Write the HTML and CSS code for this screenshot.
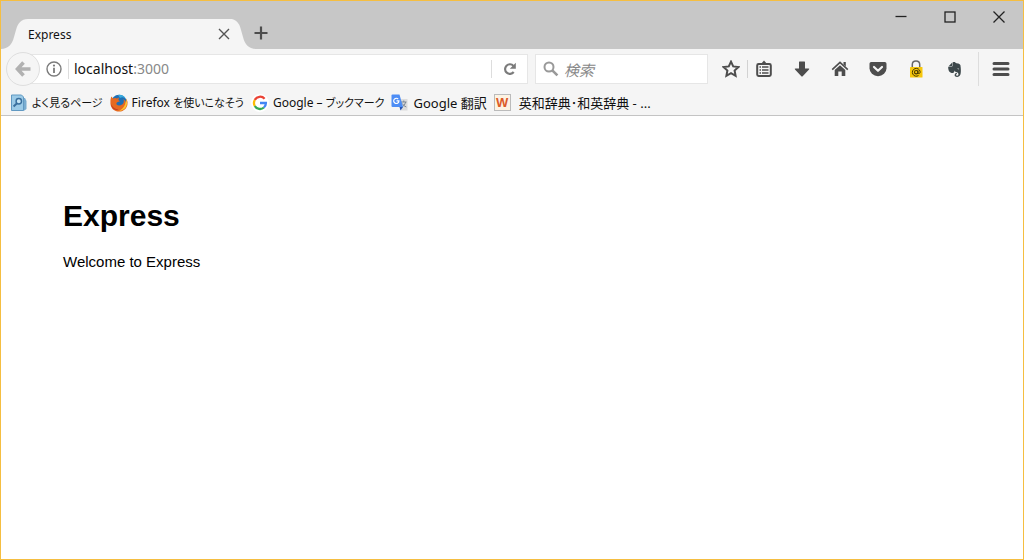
FILE: index.html
```html
<!DOCTYPE html>
<html lang="ja">
<head>
  <meta charset="UTF-8">
  <meta name="viewport" content="width=device-width, initial-scale=1.0">
  <title>Express</title>
  <link rel="stylesheet" href="styles.css">
</head>
<body>
  <div class="window">
    <header class="titlebar">
      <div class="tab">
        <svg class="tab-edge" width="27" height="30" viewBox="1 0 27 30"><path d="M0 30C8 30 12 26 14 18L16 11C18 4 21 0 28 0V30Z" fill="#f5f5f5"/></svg>
        <div class="tab-body">
          <span class="tab-title">Express</span>
          <button class="tab-close" aria-label="タブを閉じる">
            <svg width="12" height="12" viewBox="0 0 12 12"><path d="M1 1L11 11M11 1L1 11" stroke="#555" stroke-width="1.4" fill="none"/></svg>
          </button>
        </div>
        <svg class="tab-edge" width="25" height="30" viewBox="3 0 25 30"><path d="M28 30C20 30 16 26 14 18L12 11C11 6 9 2 3 0V30Z" fill="#f5f5f5"/></svg>
      </div>
      <button class="new-tab" aria-label="新しいタブ">
        <svg width="14" height="14" viewBox="0 0 14 14"><path d="M7 0.5V13.5M0.5 7H13.5" stroke="#4d4d4d" stroke-width="2.2" fill="none"/></svg>
      </button>
      <div class="window-buttons">
        <button aria-label="最小化"><svg width="12" height="12" viewBox="0 0 12 12"><path d="M0.5 5.5H11.5" stroke="#222" stroke-width="1.3"/></svg></button>
        <button aria-label="最大化"><svg width="12" height="12" viewBox="0 0 12 12"><rect x="1" y="1" width="10" height="10" fill="none" stroke="#222" stroke-width="1.3"/></svg></button>
        <button aria-label="閉じる"><svg width="12" height="12" viewBox="0 0 12 12"><path d="M0.5 0.5L11.5 11.5M11.5 0.5L0.5 11.5" stroke="#222" stroke-width="1.3"/></svg></button>
      </div>
    </header>

    <nav class="toolbar">
      <button class="back" aria-label="戻る">
        <svg width="16" height="16" viewBox="0 0 16 16"><path d="M8.5 1.5L2.5 8L8.5 14.5M3 8H15.5" stroke="#b1b1b1" stroke-width="3.6" fill="none"/></svg>
      </button>
      <div class="url-box">
        <svg class="info" width="16" height="16" viewBox="0 0 16 16"><circle cx="8" cy="8" r="7" fill="none" stroke="#7b7b7b" stroke-width="1.4"/><circle cx="8" cy="4.6" r="1.1" fill="#7b7b7b"/><path d="M8 6.8V12" stroke="#7b7b7b" stroke-width="1.8"/></svg>
        <a class="url" href="#">localhost<span>:3000</span></a>
        <button class="reload" aria-label="再読み込み">
          <svg width="14" height="14" viewBox="0 0 14 14"><path d="M10.5 3.9A4.8 4.8 0 1 0 10.7 10" stroke="#7b7b7b" stroke-width="2.2" fill="none"/><path d="M12.8 0.8V6.8H6.8Z" fill="#7b7b7b"/></svg>
        </button>
      </div>
      <label class="search-box">
        <svg width="16" height="16" viewBox="0 0 16 16"><circle cx="6" cy="6" r="4.5" fill="none" stroke="#999" stroke-width="2"/><path d="M9.3 9.3L14.4 14.4" stroke="#999" stroke-width="2.6"/></svg>
        <input type="text" placeholder="検索" aria-label="検索">
      </label>
      <button class="star" aria-label="ブックマーク">
        <svg width="18" height="18" viewBox="0 0 18 18"><path d="M9 1.7L11.2 6.4L16.4 7L12.6 10.5L13.6 15.8L9 13.2L4.4 15.8L5.4 10.5L1.6 7L6.8 6.4Z" fill="none" stroke="#4d4d4d" stroke-width="2"/></svg>
      </button>
      <div class="tools">
        <button aria-label="ブックマーク一覧">
          <svg width="16" height="18" viewBox="0 0 16 18"><path d="M5 4L8 0.5L11 4Z" fill="#4d4d4d"/><rect x="1.2" y="4" width="13.6" height="12" rx="1.4" fill="none" stroke="#4d4d4d" stroke-width="2"/><path d="M3.5 7H5M6 7H12.5M3.5 10H5M6 10H12.5M3.5 13H5M6 13H12.5" stroke="#4d4d4d" stroke-width="1.3"/></svg>
        </button>
        <button aria-label="ダウンロード">
          <svg width="16" height="18" viewBox="0 0 16 18"><path d="M5 2Q5 1.5 5.5 1.5H10.5Q11 1.5 11 2V8.5H14.5Q15.8 8.5 15 9.5L8.7 16.2Q8 16.8 7.3 16.2L1 9.5Q0.2 8.5 1.5 8.5H5Z" fill="#4d4d4d"/></svg>
        </button>
        <button aria-label="ホーム">
          <svg width="18" height="18" viewBox="0 0 18 18"><path d="M1.2 9.6L9 2.4L16.8 9.6" fill="none" stroke="#4d4d4d" stroke-width="1.6"/><path d="M12.5 2H14.8V6.5L12.5 4.4ZM9 5.2L14.3 10V16H10.7V11.5H7.3V16H3.7V10Z" fill="#4d4d4d"/></svg>
        </button>
        <button aria-label="Pocket">
          <svg width="18" height="18" viewBox="0 0 18 18"><path d="M2.2 2H15.8Q17.5 2 17.5 3.7V8.2A8.5 8 0 0 1 0.5 8.2V3.7Q0.5 2 2.2 2Z" fill="#4d4d4d"/><path d="M5 7L9 10.8L13 7" fill="none" stroke="#f5f5f5" stroke-width="2.2" stroke-linecap="round" stroke-linejoin="round"/></svg>
        </button>
        <button aria-label="パスワード">
          <svg width="14" height="18" viewBox="0 0 14 18"><path d="M3.3 8V4.5Q3.3 1 7 1T10.7 4.5V8" fill="none" stroke="#666" stroke-width="1.5"/><rect x="1" y="7" width="12.5" height="10.5" rx="0.6" fill="#f7c70d"/><circle cx="7.2" cy="12.2" r="1.7" fill="none" stroke="#463800" stroke-width="1.1"/><path d="M9 10.4V12.6Q9.2 14 10.3 13.6Q11.3 13 11.1 11.6A3.9 3.9 0 1 0 9.5 15.5" fill="none" stroke="#463800" stroke-width="1"/></svg>
        </button>
        <button aria-label="Evernote">
          <svg width="15" height="15" viewBox="0 0 24 24"><path fill="#3d484b" d="M8.222 5.393c0 .239-.02.637-.256.895-.257.24-.652.259-.888.259H4.552c-.73 0-1.165 0-1.46.04-.159.02-.356.1-.455.14-.04.019-.04 0-.02-.02L8.38.796c.02-.02.04-.02.02.02-.04.099-.118.298-.138.457-.04.298-.04.736-.04 1.472v2.647zm5.348 17.869c-.67-.438-1.026-1.015-1.164-1.373a2.924 2.924 0 01-.217-1.095 3.007 3.007 0 013-3.004c.493 0 .888.398.888.895a.88.88 0 01-.454.776c-.099.06-.237.1-.336.12-.098.02-.473.06-.65.218-.198.16-.356.418-.356.697 0 .298.118.577.316.776.355.358.829.557 1.342.557a2.436 2.436 0 002.427-2.447c0-1.214-.809-2.29-1.875-2.766-.158-.08-.414-.14-.651-.2a8.04 8.04 0 00-.592-.1c-.829-.1-2.901-.755-3.04-2.605 0 0-.611 2.785-1.835 3.54-.118.06-.276.12-.454.16-.177.04-.374.06-.434.06-1.993.12-4.105-.517-5.565-2.03 0 0-.987-.815-1.5-3.103-.118-.558-.355-1.553-.493-2.488-.06-.338-.08-.597-.099-.836 0-.975.592-1.631 1.342-1.73h4.026c.69 0 1.086-.18 1.342-.42.336-.317.415-.775.415-1.312V1.354C9.05.617 9.703 0 10.669 0h.474c.197 0 .434.02.651.04.158.02.296.06.533.12 1.204.298 1.46 1.532 1.46 1.532s2.27.398 3.415.597c1.085.199 3.77.378 4.282 3.104 1.204 6.487.474 12.775.415 12.775-.849 6.129-5.901 5.83-5.901 5.83a4.1 4.1 0 01-2.428-.736zm4.54-13.034c-.652-.06-1.204.2-1.402.697-.04.1-.079.219-.059.278.02.06.06.08.099.1.237.12.631.179 1.204.239.572.06.967.1 1.223.06.04 0 .08-.02.119-.08.04-.06.02-.18.02-.28-.06-.536-.553-.934-1.204-1.014z"/></svg>
        </button>
      </div>
      <button class="menu" aria-label="メニュー">
        <svg width="18" height="16" viewBox="0 0 18 16"><path d="M2 2.5H16M2 8H16M2 13.5H16" stroke="#4d4d4d" stroke-width="3" stroke-linecap="round"/></svg>
      </button>
    </nav>

    <nav class="bookmarks">
      <a href="#">
        <svg width="18" height="18" viewBox="0 0 18 18"><path d="M3 4H15L16.5 7V15L14.5 16.5H3Z" fill="#79acd0"/><path d="M1.5 1H11.5L13.5 3V16.5H1.5Z" fill="#9bcae7" stroke="#6199c2"/><circle cx="8.8" cy="7.2" r="2.7" fill="#c6e5f5" stroke="#396f9e" stroke-width="1.5"/><path d="M7 9.3L3.6 12.5" stroke="#396f9e" stroke-width="2"/></svg>
        <span class="kana">よく見るページ</span>
      </a>
      <a href="#">
        <svg width="18" height="18" viewBox="0 0 18 18"><circle cx="9" cy="8.6" r="7.8" fill="#1f6fb4"/><path d="M8 1Q13 0 16 5Q13 2 10 4Z" fill="#37a9dc"/><path d="M1.2 2.5L3.2 4.5Q5 3.6 7 4.4L9 3.5L8.4 6L10 7.3L7.2 8.2Q5.8 9.1 6.6 10.5Q8.8 12.6 12.5 10.3Q14.5 8.7 13.5 5.1Q15.7 6.8 15.6 9L16.4 4.4Q18 7.4 17.4 11C16.3 15.2 13 17.7 9 17.6C4.4 17.6 0.8 14.5 0.4 9.5Q0.2 5.4 1.2 2.5Z" fill="#e66920"/><path d="M16.2 5Q17.8 8.8 16.4 12.3Q14.3 16.7 9 16.9Q13.8 14.5 15.2 10Z" fill="#ffc530"/><path d="M1 10Q3.3 15.4 8.6 15.5Q5 17 2.6 14.3Q1.2 12.6 1 10Z" fill="#c63b20"/></svg>
        <span class="label">Firefox <span class="kana">を使いこなそう</span></span>
      </a>
      <a href="#">
        <svg width="18" height="18" viewBox="0 0 18 18"><circle cx="9" cy="9" r="9" fill="#fff"/><path d="M13.6 4.7A6 6 0 0 0 3.8 6" fill="none" stroke="#ea4335" stroke-width="2.3"/><path d="M3.8 6A6 6 0 0 0 3.8 12" fill="none" stroke="#fbbc05" stroke-width="2.3"/><path d="M3.8 12A6 6 0 0 0 12.9 13.5" fill="none" stroke="#34a853" stroke-width="2.3"/><path d="M9 9H14.9A6 6 0 0 1 12.9 13.5" fill="none" stroke="#4285f4" stroke-width="2.3"/></svg>
        <span class="label">Google – <span class="kana">ブックマーク</span></span>
      </a>
      <a href="#">
        <svg width="18" height="18" viewBox="0 0 18 18"><path d="M7 5H16.5V16.5H10Z" fill="#dcdcdc"/><path d="M10 8H15.5M12.8 6.5V8M11 13Q14 11.5 14.7 8M11.3 9.5Q12.5 12 15.3 13" fill="none" stroke="#7b8794"/><path d="M1.5 0.5H8.5L12 13H1.5Q0.5 13 0.5 12V1.5Q0.5 0.5 1.5 0.5Z" fill="#4d8df5"/><path d="M8.5 13H12L9.5 16.5Z" fill="#2855b0"/><path d="M7.2 5.1A2.6 2.6 0 1 0 7.9 6.9H5.5" fill="none" stroke="#fff" stroke-width="1.2"/></svg>
        Google 翻訳
      </a>
      <a class="dictionary" href="#">
        <span class="w-icon">W</span>
        英和辞典･和英辞典 - ...
      </a>
    </nav>

    <main class="page">
      <h1>Express</h1>
      <p>Welcome to Express</p>
    </main>
  </div>
</body>
</html>
```
FILE: styles.css
```css
* {
  box-sizing: border-box;
}
body {
  margin: 0;
  font-family: "Noto Sans", "Noto Sans CJK JP", sans-serif;
  font-size: 12px;
  color: #111;
}
button {
  display: flex;
  align-items: center;
  justify-content: center;
  padding: 0;
  border: none;
  background: none;
}
a {
  color: inherit;
  text-decoration: none;
}
svg {
  flex: none;
}
.window {
  display: flex;
  flex-direction: column;
  min-height: 100vh;
  border: 1px solid #f5be41;
  background: #fff;
}

/* title bar */
.titlebar {
  display: flex;
  align-items: flex-end;
  height: 48px;
  background: #c7c7c7;
}
.tab {
  display: flex;
  width: 256px;
  height: 30px;
}
.tab-body {
  flex: 1;
  display: flex;
  align-items: center;
  justify-content: space-between;
  background: #f5f5f5;
}
.tab-title {
  padding-top: 2px;
  line-height: 16px;
}
.tab-close {
  width: 16px;
  height: 16px;
}
.new-tab {
  height: 32px;
  margin-left: -3px;
}
.window-buttons {
  display: flex;
  align-self: flex-start;
  margin-left: auto;
}
.window-buttons button {
  width: 49px;
  height: 32px;
}

/* address bar row */
.toolbar {
  display: flex;
  align-items: center;
  height: 40px;
  padding-left: 5px;
  background: #f5f5f5;
}
.back {
  z-index: 1;
  flex: none;
  width: 34px;
  height: 34px;
  margin-right: -10px;
  border: 1px solid #dedede;
  border-radius: 50%;
  background: #f5f5f5;
}
.url-box {
  flex: 1;
  display: flex;
  align-items: center;
  height: 30px;
  padding-left: 15px;
  border: 1px solid #e6e6e6;
  background: #fff;
}
.url {
  flex: 1;
  margin-left: 6px;
  padding-left: 5px;
  border-left: 1px solid #ddd;
  font-size: 14px;
  line-height: 20px;
}
.url span {
  color: #888;
}
.reload {
  width: 36px;
  height: 18px;
  border-left: 1px solid #ddd;
}
.search-box {
  display: flex;
  align-items: center;
  width: 173px;
  height: 30px;
  margin-left: 7px;
  padding-left: 7px;
  border: 1px solid #e6e6e6;
  background: #fff;
}
.search-box input {
  flex: 1;
  min-width: 0;
  padding: 0 0 0 5px;
  border: none;
  outline: none;
  background: none;
  font: 15px "Noto Sans CJK JP", sans-serif;
}
.search-box input::placeholder {
  color: #888;
  font-style: italic;
}
.star {
  width: 34px;
  height: 18px;
  margin-left: 6px;
  border-right: 1px solid #d2d2d2;
}
.tools {
  display: flex;
  gap: 6px;
}
.tools button {
  width: 32px;
  height: 32px;
}
.menu {
  width: 45px;
  height: 34px;
  margin-left: 8px;
  border-left: 1px solid #ddd;
}

/* bookmarks bar */
.bookmarks {
  display: flex;
  gap: 7px;
  height: 27px;
  padding: 1px 0 0 9px;
  border-bottom: 1px solid #c4c4c4;
  background: #f5f5f5;
}
.bookmarks a {
  display: flex;
  align-items: center;
  gap: 4px;
  font-size: 13px;
  line-height: 24px;
  white-space: nowrap;
  font-feature-settings: "palt";
}
.bookmarks .label {
  font-size: 12px;
}
.bookmarks .kana {
  font-size: 11px;
}
.bookmarks .dictionary {
  gap: 8px;
}
.w-icon {
  width: 17px;
  height: 17px;
  border: 1px solid #bbb;
  background: #fdf3e3;
  color: #dc5a28;
  font-family: "Liberation Sans", sans-serif;
  font-weight: bold;
  line-height: 16px;
  text-align: center;
}

/* page content */
.page {
  padding: 50px 62px;
  font-family: "Liberation Sans", Arial, sans-serif;
  font-size: 15px;
  color: #000;
}
.page h1 {
  margin: 32px 0 18px;
  font-size: 30px;
  line-height: 36px;
}
.page p {
  margin: 0;
  line-height: 20px;
}
```
